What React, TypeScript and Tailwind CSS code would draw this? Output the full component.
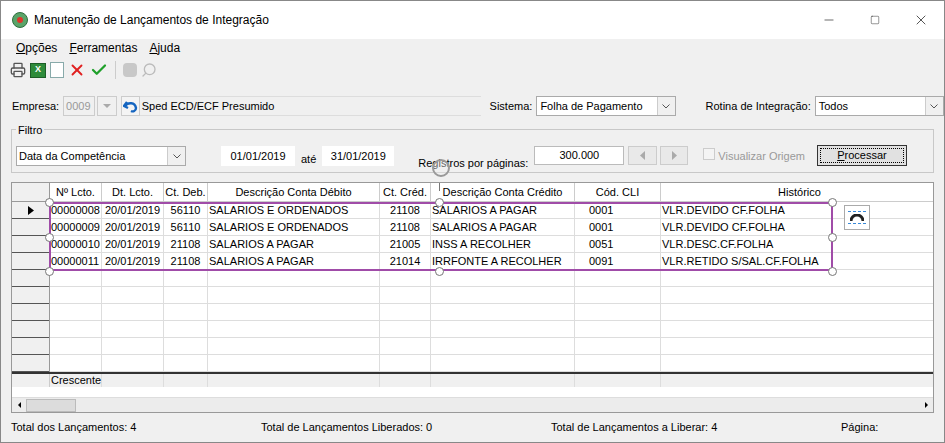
import React from "react";
import { Minus, Square, X, Check, Printer, Search } from "lucide-react";

const cols = [
  { t: "Nº Lcto.", w: 52 },
  { t: "Dt. Lcto.", w: 62 },
  { t: "Ct. Deb.", w: 44 },
  { t: "Descrição Conta Débito", w: 172 },
  { t: "Ct. Créd.", w: 51 },
  { t: "Descrição Conta Crédito", w: 144 },
  { t: "Cód. CLI", w: 86 },
  { t: "Histórico", w: 278 },
];

const rows = [
  ["00000008", "20/01/2019", "56110", "SALARIOS E ORDENADOS", "21108", "SALARIOS A PAGAR", "0001", "VLR.DEVIDO CF.FOLHA"],
  ["00000009", "20/01/2019", "56110", "SALARIOS E ORDENADOS", "21108", "SALARIOS A PAGAR", "0001", "VLR.DEVIDO CF.FOLHA"],
  ["00000010", "20/01/2019", "21108", "SALARIOS A PAGAR", "21005", "INSS A RECOLHER", "0051", "VLR.DESC.CF.FOLHA"],
  ["00000011", "20/01/2019", "21108", "SALARIOS A PAGAR", "21014", "IRRFONTE A RECOLHER", "0091", "VLR.RETIDO S/SAL.CF.FOLHA"],
];

const align = ["justify-start", "justify-center", "justify-center", "justify-start", "justify-center", "justify-start", "justify-start pl-[14px]", "justify-start"];

const Arrow = () => (
  <div className="w-[18px] h-full flex-none flex items-center justify-center border-l border-[#cccccc] bg-[#f0f0f0]">
    <svg width="8" height="5" viewBox="0 0 8 5"><path d="M0.5 0.5 L4 4 L7.5 0.5" fill="none" stroke="#555" /></svg>
  </div>
);

const Handle = ({ x, y }: { x: number; y: number }) => (
  <div className="absolute w-[9px] h-[9px] rounded-full bg-white border border-[#777]" style={{ left: x - 4, top: y - 4 }} />
);

export default function App() {
  return (
    <div className="w-[945px] h-[443px] bg-[#f0f0f0] text-[11px] text-black overflow-hidden relative border border-[#888] whitespace-nowrap" style={{ fontFamily: "'Liberation Sans', Arial, sans-serif" }}>
      {/* title bar */}
      <div className="h-[38px] bg-white flex items-center pl-[11px]">
        <div className="w-[16px] h-[16px] rounded-full bg-[#5aa469] border border-[#2f6f3f] flex items-center justify-center mr-[6px]">
          <div className="w-[6px] h-[6px] rounded-full bg-[#e0352b]" />
        </div>
        <span className="text-[12px]">Manutenção de Lançamentos de Integração</span>
        <div className="ml-auto flex items-center h-full">
          <div className="w-[46px] flex justify-center"><Minus size={14} strokeWidth={1} /></div>
          <div className="w-[46px] flex justify-center"><Square size={10} strokeWidth={1} /></div>
          <div className="w-[46px] flex justify-center"><X size={16} strokeWidth={1} /></div>
        </div>
      </div>
      {/* menu */}
      <div className="h-[18px] flex items-center gap-[12px] pl-[15px] text-[12px]">
        <span><u>O</u>pções</span>
        <span><u>F</u>erramentas</span>
        <span><u>A</u>juda</span>
      </div>
      {/* toolbar */}
      <div className="h-[26px] flex items-center gap-[4px] pl-[9px]">
        <Printer size={16} className="text-[#555]" />
        <div className="w-[16px] h-[15px] bg-[#2e8b3a] border border-[#1d5d27] text-white text-[9px] font-bold flex items-center justify-center">X</div>
        <div className="w-[14px] h-[16px] bg-white border border-[#8aa]" />
        <X size={18} className="text-[#e02020]" strokeWidth={2.5} />
        <Check size={18} className="text-[#1fa02a]" strokeWidth={3} />
        <div className="w-px h-[18px] bg-[#ccc] mx-[3px]" />
        <div className="w-[14px] h-[14px] bg-[#c8c8c8] rounded-sm" />
        <Search size={16} className="text-[#bbb] -scale-x-100" />
      </div>
      {/* empresa row */}
      <div className="h-[22px] mt-[12px] flex items-center pl-[11px]">
        <span>Empresa:</span>
        <div className="ml-[4px] w-[32px] h-[20px] bg-[#f0f0f0] border border-[#ccc] text-[#999] flex items-center pl-[2px]">0009</div>
        <div className="ml-[2px] w-[20px] h-[20px] border border-[#ccc] flex items-center justify-center">
          <svg width="8" height="4"><path d="M0 0 L8 0 L4 4Z" fill="#aaa" /></svg>
        </div>
        <div className="ml-[4px] w-[19px] h-[20px] border border-[#ccc] bg-[#f4f4f4] flex items-center justify-center">
          <svg width="15" height="13" viewBox="0 0 15 13"><path d="M4 2 L1 6 L5 8 M2 6 C5 2 12 2 13 8 C13 11 10 12 8 11" fill="none" stroke="#1565c0" strokeWidth="2.4" /></svg>
        </div>
        <div className="w-[343px] h-[20px] border-t border-b border-[#ddd] flex items-center pl-[2px]">Sped ECD/ECF Presumido</div>
        <span className="ml-[9px]">Sistema:</span>
        <div className="ml-[4px] w-[140px] h-[20px] bg-white border border-[#aaa] flex items-center justify-between pl-[3px]">Folha de Pagamento<Arrow /></div>
        <span className="ml-[30px]">Rotina de Integração:</span>
        <div className="ml-[4px] w-[130px] h-[20px] bg-white border border-[#aaa] flex items-center justify-between pl-[3px]">Todos<Arrow /></div>
      </div>
      {/* filtro */}
      <div className="relative mx-[10px] mt-[12px] h-[44px] border border-[#c8c8c8]">
        <span className="absolute -top-[8px] left-[4px] bg-[#f0f0f0] px-[2px]">Filtro</span>
        <div className="flex items-start pl-[4px] pt-[16px]">
          <div className="w-[170px] h-[20px] bg-white border border-[#aaa] flex items-center justify-between pl-[2px]">Data da Competência<Arrow /></div>
          <div className="ml-[35px] w-[74px] h-[20px] bg-white flex items-center justify-center">01/01/2019</div>
          <span className="ml-[6px] mt-[5px]">até</span>
          <div className="ml-[6px] w-[72px] h-[20px] bg-white flex items-center justify-center">31/01/2019</div>
          <span className="ml-[24px] mt-[9px]">Registros por páginas:</span>
          <div className="ml-[6px] w-[90px] h-[19px] bg-white border border-[#bbb] flex items-center justify-center">300.000</div>
          <div className="ml-[4px] w-[29px] h-[19px] border border-[#ccc] bg-[#e9e9e9] flex items-center justify-center"><svg width="5" height="9"><path d="M5 0 L0 4.5 L5 9Z" fill="#aaa" /></svg></div>
          <div className="ml-[3px] w-[28px] h-[19px] border border-[#ccc] bg-[#e9e9e9] flex items-center justify-center"><svg width="5" height="9"><path d="M0 0 L5 4.5 L0 9Z" fill="#aaa" /></svg></div>
          <div className="ml-[15px] mt-[2px] w-[12px] h-[12px] border border-[#ccc] bg-[#f4f4f4]" />
          <span className="ml-[3px] mt-[2px] text-[#999]">Visualizar Origem</span>
          <div className="ml-[12px] -mt-[1px] w-[90px] h-[21px] border border-[#333] bg-[#e1e1e1] flex items-center justify-center">
            <div className="w-[84px] h-[15px] border border-dotted border-black flex items-center justify-center"><u>P</u>rocessar</div>
          </div>
        </div>
      </div>
      {/* grid */}
      <div className="relative mx-[10px] mt-[9px] h-[231px] border border-[#999] bg-white overflow-hidden">
        <div className="flex">
          <div className="w-[38px] flex-none bg-[#f0f0f0] border-r border-[#999]">
            <div className="h-[19px] border-b border-[#999]" />
            {Array.from({ length: 10 }).map((_, i) => (
              <div key={i} className="h-[17px] border-b border-[#555] flex items-center justify-center">
                {i === 0 && <svg width="6" height="9"><path d="M0 0 L6 4.5 L0 9Z" fill="#000" /></svg>}
              </div>
            ))}
          </div>
          <div className="flex-1">
            <div className="flex h-[19px] bg-white border-b border-[#ccc]">
              {cols.map((c, i) => (
                <div key={i} className="flex-none border-r border-[#ccc] flex items-center justify-center" style={{ width: c.w }}>{c.t}</div>
              ))}
            </div>
            {Array.from({ length: 10 }).map((_, r) => (
              <div key={r} className="flex h-[17px] border-b border-[#ddd]">
                {cols.map((c, i) => (
                  <div key={i} className={`flex-none border-r border-[#ddd] flex items-center overflow-hidden px-[1px] ${align[i]}`} style={{ width: c.w }}>
                    {rows[r] ? rows[r][i] : ""}
                  </div>
                ))}
              </div>
            ))}
          </div>
        </div>
        <div className="flex h-[15px] border-t-2 border-[#333] bg-[#f0f0f0]">
          <div className="w-[38px] flex-none border-r border-[#ccc]" />
          {cols.map((c, i) => (
            <div key={i} className="flex-none border-r border-[#ddd] flex items-center pl-[1px]" style={{ width: c.w }}>{i === 0 ? "Crescente" : ""}</div>
          ))}
        </div>
        <div className="absolute left-0 right-0 bottom-0 h-[15px] bg-[#ececec] border-t border-[#ddd] flex items-center">
          <div className="w-[14px] flex justify-center"><svg width="3" height="6"><path d="M3 0 L0 3 L3 6Z" fill="#000" /></svg></div>
          <div className="w-[50px] h-[13px] bg-[#dcdcdc] border border-[#bbb]" />
          <div className="ml-auto w-[14px] flex justify-center"><svg width="3" height="6"><path d="M0 0 L3 3 L0 6Z" fill="#000" /></svg></div>
        </div>
        {/* selection overlay */}
        <div className="absolute border-2 border-[#a04ca8] pointer-events-none" style={{ left: 37, top: 19, width: 784, height: 69 }} />
        <div className="absolute w-px h-[12px] bg-[#777]" style={{ left: 427, top: -4 }} />
        <Handle x={37} y={19} /><Handle x={427} y={19} /><Handle x={820} y={19} />
        <Handle x={37} y={54} /><Handle x={820} y={54} />
        <Handle x={37} y={88} /><Handle x={427} y={88} /><Handle x={820} y={88} />
        <div className="absolute w-[26px] h-[25px] bg-white border border-[#aaa] flex flex-col items-center justify-center gap-[2px]" style={{ left: 832, top: 22 }}>
          <div className="w-[18px] border-t border-dashed border-[#3a8ad8]" />
          <svg width="14" height="7"><path d="M1 7 A6 6 0 0 1 13 7" fill="none" stroke="#222" strokeWidth="3" /></svg>
          <div className="w-[18px] border-t border-dashed border-[#3a8ad8]" />
        </div>
      </div>
      <div className="absolute w-[18px] h-[18px] rounded-full border-2 border-[#999] bg-[#f0f0f0]/40" style={{ left: 431, top: 158 }} />
      {/* status */}
      <div className="h-[20px] mt-[4px] flex items-center pl-[10px]">
        <span className="w-[250px]">Total dos Lançamentos: 4</span>
        <span className="w-[290px]">Total de Lançamentos Liberados: 0</span>
        <span className="w-[290px]">Total de Lançamentos a Liberar: 4</span>
        <span>Página:</span>
      </div>
    </div>
  );
}
